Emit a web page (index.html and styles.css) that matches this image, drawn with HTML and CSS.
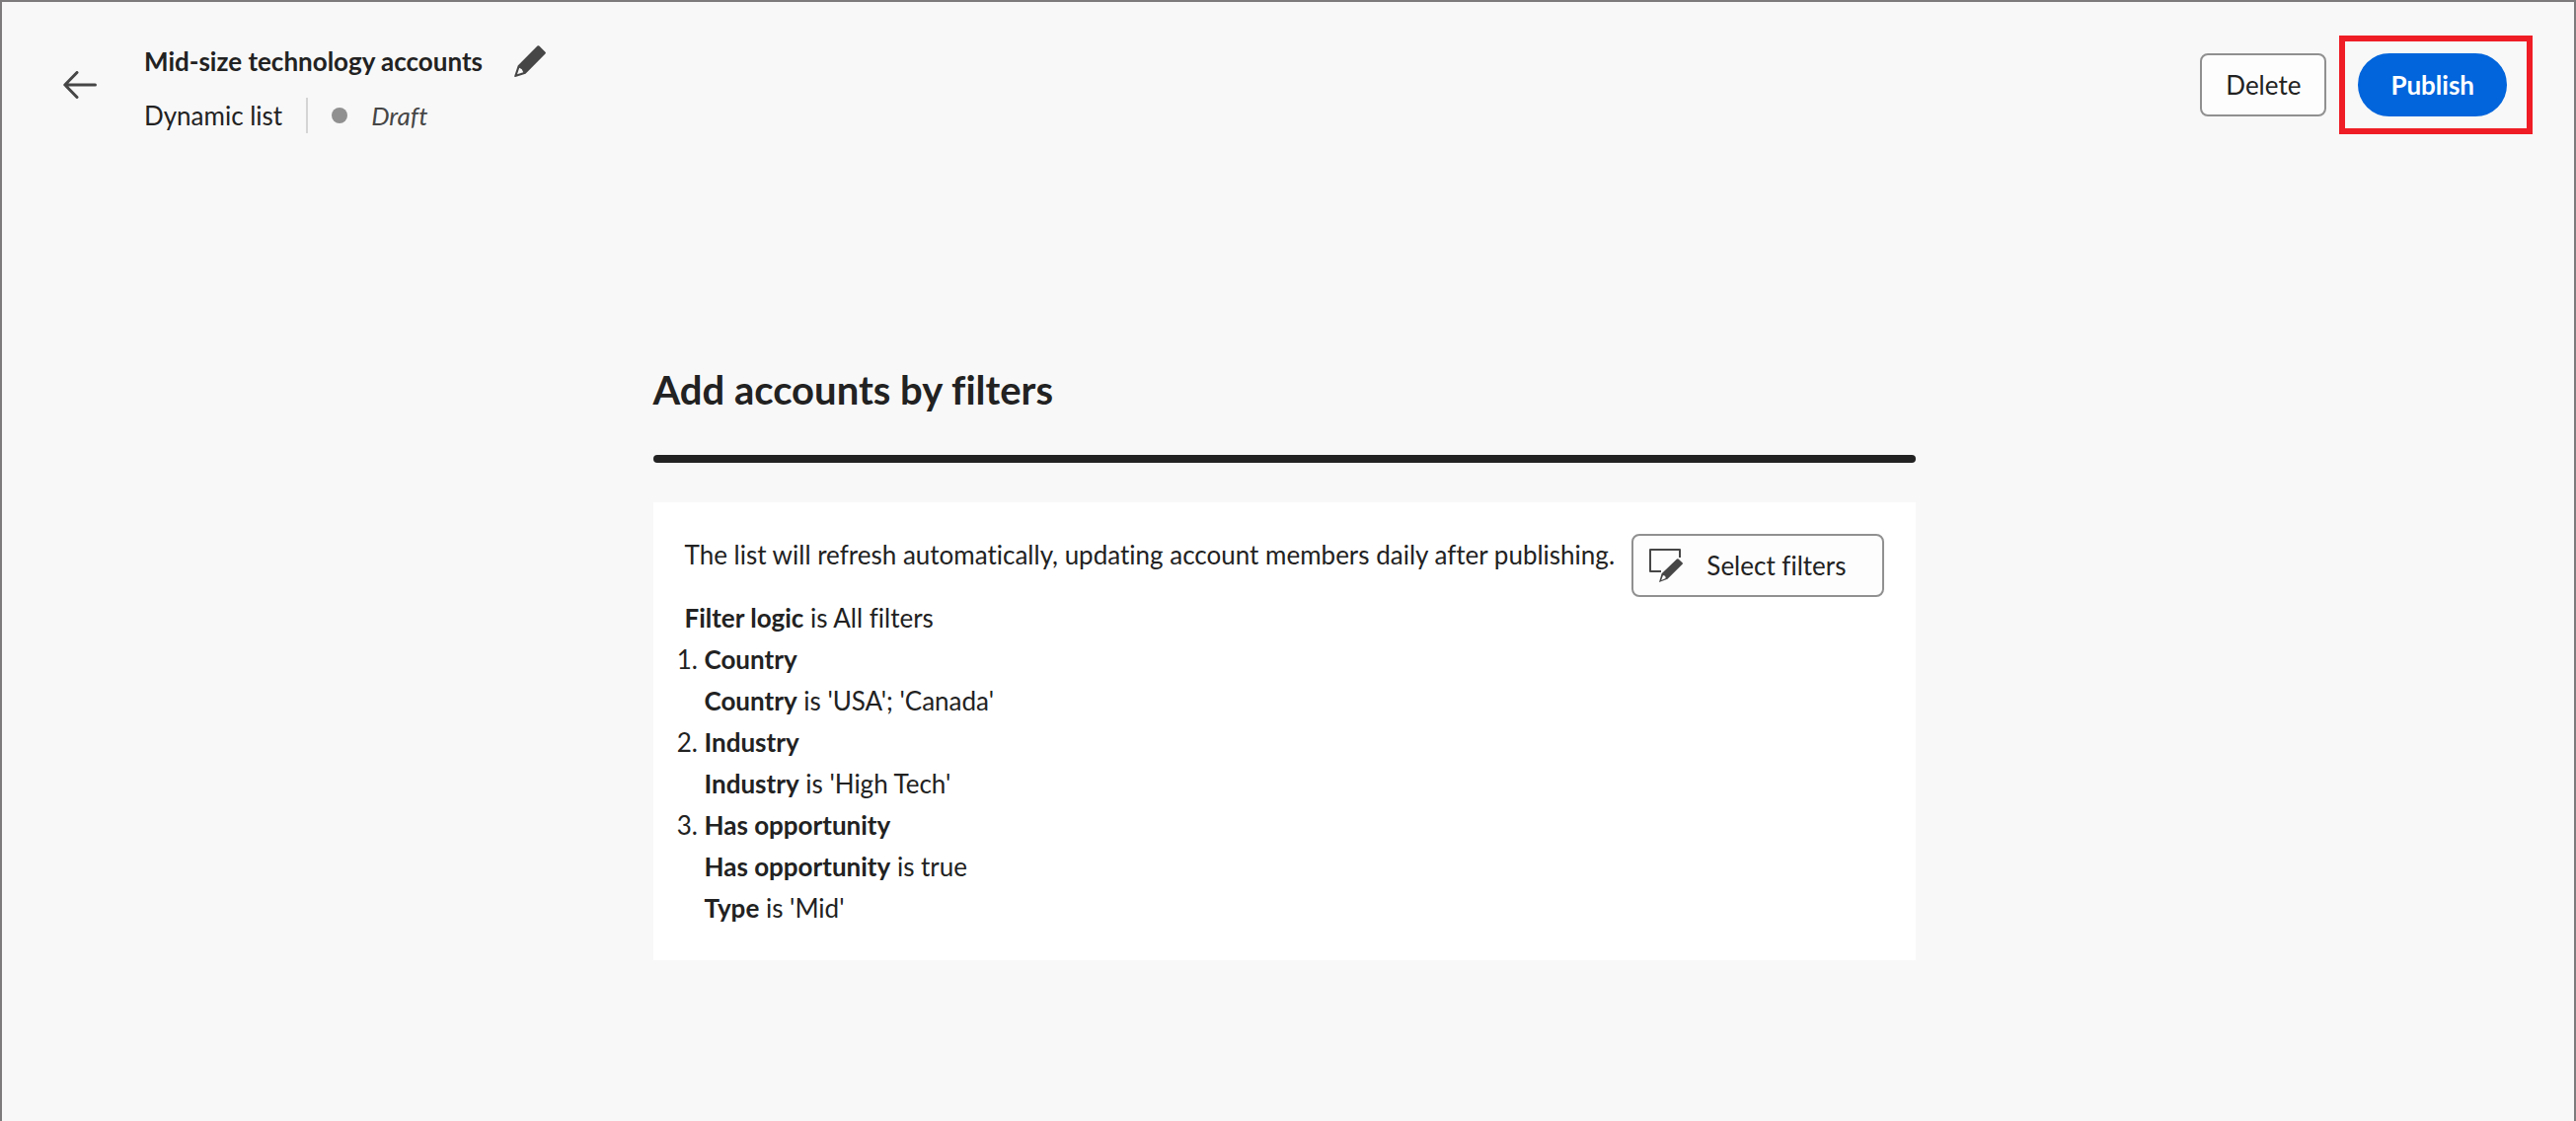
FILE: index.html
```html
<!DOCTYPE html>
<html lang="en">
<head>
  <meta charset="utf-8">
  <meta name="viewport" content="width=device-width, initial-scale=1">
  <title>Mid-size technology accounts</title>
  <link rel="stylesheet" href="styles.css">
</head>
<body>
  <header class="page-header">
    <a class="back" href="#" aria-label="Back">
      <svg width="34" height="28" viewBox="0 0 34 28" fill="none" stroke="#464646" stroke-width="3" stroke-linecap="round" stroke-linejoin="round"><path d="M32.500 14H2M14 1.500L1.800 14 14 26.500"/></svg>
    </a>
    <div class="titles">
      <div class="title-row">
        <h1 class="title">Mid-size technology accounts</h1>
        <button class="icon-button" type="button" aria-label="Edit name">
          <svg width="32" height="32" viewBox="0 0 32 32"><path fill="#464646" fill-rule="evenodd" d="M23.500.6q.9-.9 1.800 0l6.200 6.100q.9.900 0 1.800L11.500 28.700 1.200 31.900Q-.1 32.200.2 30.900L3.700 20.600zM5.200 22.800L3 29.300 9.200 27.300 7.800 24.300z"/></svg>
        </button>
      </div>
      <div class="meta-row">
        <span>Dynamic list</span>
        <span class="divider"></span>
        <span class="status"><span class="dot"></span><em>Draft</em></span>
      </div>
    </div>
    <div class="actions">
      <button class="button" type="button">Delete</button>
      <div class="callout">
        <button class="button button-primary" type="button">Publish</button>
      </div>
    </div>
  </header>
  <main class="content">
    <section class="panel">
      <h2 class="heading">Add accounts by filters</h2>
      <div class="rule"></div>
      <div class="card">
        <div class="summary">
          <p class="note">The list will refresh automatically, updating account members daily after publishing.</p>
          <p class="logic"><b>Filter logic</b> is All filters</p>
          <ol class="filters">
            <li><b>Country</b><div><b>Country</b> is 'USA'; 'Canada'</div></li>
            <li><b>Industry</b><div><b>Industry</b> is 'High Tech'</div></li>
            <li><b>Has opportunity</b><div><b>Has opportunity</b> is true</div><div><b>Type</b> is 'Mid'</div></li>
          </ol>
        </div>
        <button class="button button-select" type="button">
          <svg width="34" height="34" viewBox="0 0 34 34"><path fill="none" stroke="#464646" stroke-width="2" stroke-linejoin="round" d="M12 23H1V1h30v8"/><path fill="#464646" fill-rule="evenodd" d="M28 10.500q.8-.7 1.600 0l4 3.800q.7.700 0 1.500L18.500 30.700 10 34l2.600-8.800zM14 27l-1.800 4.900 4.500-1.800-.500-2.400z"/></svg>
          <span>Select filters</span>
        </button>
      </div>
    </section>
  </main>
</body>
</html>
```
FILE: styles.css
```css
* {
  box-sizing: border-box;
}

body {
  min-height: 100vh;
  margin: 0;
  border: 2px solid #7d7b7b;
  border-bottom: 0;
  background: #f8f8f8;
  color: #222;
  font: 26px/42px Lato, "Noto Sans", sans-serif;
  font-variant-ligatures: none;
}

h1, h2, p, ol {
  margin: 0;
}

.page-header {
  display: flex;
  align-items: flex-start;
  padding: 34px 42px 0 62px;
}

.back {
  display: flex;
  margin-top: 36px;
}

.titles {
  margin-left: 48px;
  padding-top: 5px;
}

.title-row {
  display: flex;
  align-items: center;
  gap: 32px;
}

.title {
  font-size: 26px;
  line-height: 42px;
}

.icon-button {
  display: flex;
  padding: 0;
  border: 0;
  background: none;
}

.meta-row {
  display: flex;
  align-items: center;
  gap: 24px;
  margin-top: 13px;
}

.divider {
  width: 2px;
  height: 36px;
  background: #d5d5d5;
}

.status {
  display: flex;
  align-items: center;
  gap: 24px;
  color: #464646;
}

.dot {
  width: 16px;
  height: 16px;
  border-radius: 50%;
  background: #909090;
}

.actions {
  display: flex;
  align-items: center;
  gap: 13px;
  margin-left: auto;
}

.button {
  height: 64px;
  padding: 0 24px;
  border: 2px solid #909090;
  border-radius: 8px;
  background: #fdfdfd;
  color: #222;
  font: inherit;
  font-variant-ligatures: none;
}

.button-primary {
  padding: 0 31px;
  border-color: #0265dc;
  border-radius: 32px;
  background: #0265dc;
  color: #fff;
  font-weight: 700;
}

.callout {
  display: flex;
  padding: 12px 20px 12px 13px;
  border: 6px solid #ef1d25;
}

.content {
  display: flex;
  justify-content: center;
  padding: 233px 8px 160px 0;
}

.panel {
  width: 49vw;
  min-width: 1279px;
}

.heading {
  font-size: 40px;
  line-height: 48px;
}

.rule {
  height: 8px;
  margin: 42px 0 40px;
  border-radius: 4px;
  background: #222;
}

.card {
  display: flex;
  justify-content: space-between;
  align-items: flex-start;
  padding: 32px;
  background: #fff;
}

.note {
  margin-bottom: 22px;
  white-space: nowrap;
}

.filters {
  padding-left: 20px;
}

.button-select {
  display: flex;
  align-items: center;
  gap: 24px;
  padding: 0 36px 0 16px;
  white-space: nowrap;
}
```
